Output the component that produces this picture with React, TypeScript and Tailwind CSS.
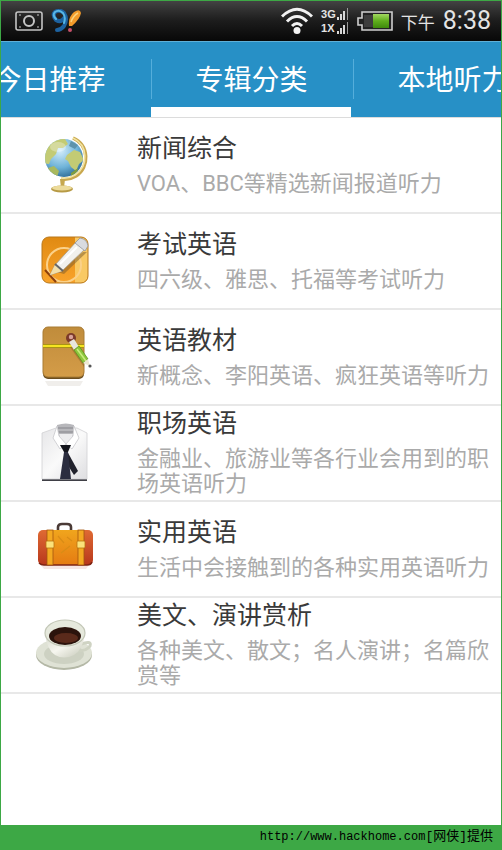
import type { ReactNode } from 'react';
import clsx from 'clsx';

function GlobeIcon() {
  return (
    <svg className="h-16 w-16" viewBox="0 0 64 64" aria-hidden="true">
      <defs>
        <radialGradient id="globe" cx="0.4" cy="0.3" r="0.75">
          <stop offset="0" stopColor="#d5eefb" />
          <stop offset="0.6" stopColor="#6fb3d8" />
          <stop offset="1" stopColor="#2c6a94" />
        </radialGradient>
        <clipPath id="globe-clip">
          <circle cx="31" cy="25" r="19" />
        </clipPath>
      </defs>
      <path d="M40 5 C56 12 57 34 43 43 C38 46 33 47 28 46" fill="none" stroke="#c9a84e" strokeWidth="3.4" />
      <path d="M40 5 C55 12 56 33 42 42 C37 45 33 46 28 45" fill="none" stroke="#f2e3a0" strokeWidth="1.6" />
      <circle cx="31" cy="25" r="19" fill="url(#globe)" />
      <g clipPath="url(#globe-clip)" fill="#c3cb74">
        <path d="M12 20 C15 10 24 5 32 6 L35 11 L30 15 L25 15 L23 21 L18 26 L16 31 L9 30 Z" />
        <path d="M34 22 L41 17 L47 19 L51 27 L46 31 L43 38 L38 34 L35 28 L32 26 Z" />
        <path d="M15 35 L21 33 L26 38 L24 44 L17 42 Z" fill="#a9b95e" />
        <path d="M38 40 L45 35 L44 42 L38 45 Z" fill="#7f9d3f" />
        <path d="M38 8 L45 12 L42 16 L36 13 Z" fill="#5e93ac" />
      </g>
      <ellipse cx="25" cy="14" rx="8" ry="5" fill="#fff" opacity="0.3" />
      <path d="M27 46 H32 L31 55 H28 Z" fill="#c6a84f" />
      <ellipse cx="29" cy="56" rx="11" ry="3.4" fill="#b79a45" />
      <ellipse cx="29" cy="55" rx="10" ry="2.4" fill="#ecdb9a" />
    </svg>
  );
}

function PenIcon() {
  return (
    <svg className="h-16 w-16" viewBox="0 0 64 64" aria-hidden="true">
      <defs>
        <linearGradient id="pad" x1="0" y1="0" x2="0" y2="1">
          <stop offset="0" stopColor="#e08a12" />
          <stop offset="1" stopColor="#f9a32b" />
        </linearGradient>
        <clipPath id="pad-clip">
          <rect x="9" y="8" width="46" height="46" rx="7" />
        </clipPath>
      </defs>
      <rect x="9" y="8" width="46" height="46" rx="7" fill="url(#pad)" />
      <g clipPath="url(#pad-clip)">
        <rect x="42" y="8" width="13" height="46" fill="#f9c964" />
        <circle cx="31" cy="36" r="17" fill="none" stroke="#fbd189" strokeWidth="2" />
      </g>
      <rect x="9" y="8" width="46" height="46" rx="7" fill="none" stroke="#b9791d" />
      <path d="M12 41 L23 53" stroke="#8d3f0c" strokeWidth="2" />
      <path d="M24 43 L50 23 L54 23 L31 45 Z" fill="#7a5a2a" opacity="0.5" />
      <path d="M17 46 L22 36 L43 13 L52 20 L29 42 Z" fill="#f1f0ec" stroke="#a59b88" strokeWidth="0.8" />
      <path d="M17 46 L22 36 L29 42 Z" fill="#f3dfa8" />
      <path d="M22 35 L30 42" stroke="#666" strokeWidth="2" />
      <path d="M42 14 L47 9 Q54 10 55 17 L52 22 Z" fill="#d9dbe0" stroke="#90949c" strokeWidth="0.8" />
      <path d="M27 35 L44 18" stroke="#fff" strokeWidth="2" />
    </svg>
  );
}

function NotebookIcon() {
  return (
    <svg className="h-16 w-16" viewBox="0 0 64 64" aria-hidden="true">
      <defs>
        <linearGradient id="cover" x1="0" y1="0" x2="0" y2="1">
          <stop offset="0" stopColor="#c08c3b" />
          <stop offset="1" stopColor="#d49c48" />
        </linearGradient>
      </defs>
      <path d="M12 56 L50 56 L47 61 L15 61 Z" fill="#f0eeeb" />
      <rect x="10" y="3" width="41" height="51" rx="5" fill="#6b4d1e" />
      <rect x="10" y="2" width="41" height="50" rx="5" fill="url(#cover)" stroke="#a97c35" />
      <path d="M10 21 H51" stroke="#8f7a12" strokeWidth="4" />
      <path d="M10 21 H51" stroke="#f6e420" strokeWidth="2.4" />
      <path d="M37 22 L51 42 V30 L45 20 Z" fill="#8b6328" opacity="0.5" />
      <circle cx="38" cy="13" r="5" fill="#7c3a2a" />
      <circle cx="38" cy="12" r="2.2" fill="#d8a29a" />
      <path d="M36 17 L41 14 L46 22 L41 25 Z" fill="#e8e6df" />
      <path d="M41 25 L46 21 L55 34 L50 38 Z" fill="#8cc63c" stroke="#5d9420" strokeWidth="0.8" />
      <path d="M44 24 L53 36" stroke="#c8ec7c" strokeWidth="1.5" />
      <path d="M50 38 L55 34 L57 41 Z" fill="#ede8d2" />
      <circle cx="57" cy="41" r="1.6" fill="#555" />
    </svg>
  );
}

function ShirtIcon() {
  return (
    <svg className="h-16 w-16" viewBox="0 0 64 64" aria-hidden="true">
      <defs>
        <linearGradient id="shirt" x1="0" y1="0" x2="1" y2="1">
          <stop offset="0" stopColor="#e6e6e8" />
          <stop offset="0.5" stopColor="#fafafa" />
          <stop offset="1" stopColor="#dedee1" />
        </linearGradient>
      </defs>
      <path d="M9 56 H54 V60 H9 Z" fill="#3f3f46" />
      <path d="M9 12 L23 7 L44 7 L54 12 V58 H9 Z" fill="url(#shirt)" stroke="#d0d0d3" strokeWidth="0.8" />
      <path d="M24 4 Q33 1 41 4 L40 18 L33 25 L25 18 Z" fill="#b7b7bb" />
      <path d="M25 7 H40 M25 11 H40" stroke="#97979c" strokeWidth="1.5" />
      <path d="M26 13 H40 L38 20 L33 25 L28 20 Z" fill="#ececee" />
      <path d="M24 5 L20 17 L27 28 L33 23 L26 15 Z" fill="#fff" stroke="#c8c8cc" strokeWidth="0.8" />
      <path d="M41 5 L46 17 L39 28 L33 23 L40 15 Z" fill="#fff" stroke="#c8c8cc" strokeWidth="0.8" />
      <path d="M34 30 L45 50 L41 54 L34 43 Z" fill="#20212c" />
      <path d="M27 24 H38 L35 31 H31 Z" fill="#14151d" />
      <path d="M31 31 H35 L38 58 H27 Z" fill="#2b2d3f" />
    </svg>
  );
}

function SuitcaseIcon() {
  return (
    <svg className="h-16 w-16" viewBox="0 0 64 64" aria-hidden="true">
      <defs>
        <linearGradient id="case" x1="0" y1="0" x2="0" y2="1">
          <stop offset="0" stopColor="#df6a33" />
          <stop offset="1" stopColor="#b8371c" />
        </linearGradient>
        <linearGradient id="case-front" x1="0" y1="0" x2="0" y2="1">
          <stop offset="0" stopColor="#f0a51d" />
          <stop offset="1" stopColor="#e57b12" />
        </linearGradient>
      </defs>
      <path d="M8 48 H56 L53 52 H11 Z" fill="#f6e6e4" />
      <path d="M25 14 V10 Q25 7 29 7 H34 Q38 7 38 10 V14" fill="none" stroke="#4a3a36" strokeWidth="2.6" />
      <rect x="5" y="13" width="55" height="35" rx="5" fill="url(#case)" />
      <rect x="14" y="13" width="37" height="35" fill="url(#case-front)" />
      <path d="M6 46 Q8 48 11 48 H54 Q58 48 59 45" fill="none" stroke="#7e2413" strokeWidth="1.5" />
      <rect x="14" y="13" width="6" height="35" fill="#f4a821" stroke="#a4550f" strokeWidth="0.8" />
      <rect x="45" y="13" width="6" height="35" fill="#f4a821" stroke="#a4550f" strokeWidth="0.8" />
      <rect x="13" y="24" width="8" height="7" rx="1" fill="#fbe27a" stroke="#b9750f" strokeWidth="0.8" />
      <rect x="44" y="24" width="8" height="7" rx="1" fill="#fbe27a" stroke="#b9750f" strokeWidth="0.8" />
      <path d="M25 19 L31 26 M28 36 L37 29 M34 20 L39 24" stroke="#d98c16" strokeWidth="1.2" />
    </svg>
  );
}

function CoffeeIcon() {
  return (
    <svg className="h-16 w-16" viewBox="0 0 64 64" aria-hidden="true">
      <defs>
        <linearGradient id="cup" x1="0" y1="0" x2="1" y2="1">
          <stop offset="0" stopColor="#d3d6c8" />
          <stop offset="0.5" stopColor="#f6f6ef" />
          <stop offset="1" stopColor="#c3c6b5" />
        </linearGradient>
      </defs>
      <ellipse cx="31" cy="42" rx="28" ry="15" fill="#b4b8a6" />
      <ellipse cx="31" cy="40" rx="28" ry="15" fill="#dfe2d5" />
      <ellipse cx="31" cy="41" rx="20" ry="10" fill="#cdd1c2" />
      <path d="M48 31 Q59 27 57 33 Q54 38 44 38" fill="none" stroke="#cfd3c3" strokeWidth="3" />
      <path d="M12 20 Q14 37 22 42 Q31 47 41 42 Q50 37 52 20 Z" fill="url(#cup)" />
      <ellipse cx="32" cy="20" rx="20" ry="13" fill="#e6e9dd" stroke="#c3c7b7" strokeWidth="1.2" />
      <ellipse cx="32" cy="23" rx="16" ry="9" fill="#2b130c" />
      <ellipse cx="33" cy="25" rx="12" ry="5" fill="#5a2a1b" />
    </svg>
  );
}

function CameraIcon() {
  return (
    <svg className="h-6 w-7" viewBox="0 0 28 24" fill="none" stroke="#c4c4c4" aria-hidden="true">
      <rect x="1" y="3" width="26" height="18" rx="2" strokeWidth="1.6" />
      <circle cx="14" cy="12" r="5" strokeWidth="2" />
      <path d="M4 6 H6 M22 6 H24 M4 18 H6 M22 18 H24" strokeWidth="1" />
    </svg>
  );
}

function AssistantIcon() {
  return (
    <svg className="h-6 w-8" viewBox="0 0 32 24" fill="none" aria-hidden="true">
      <path
        d="M13 9 Q10 14 5 11 Q1 6 4 3 Q9 0 13 4 Q17 10 13 17 Q10 21 6 21"
        stroke="#1d62a0"
        strokeWidth="4"
        strokeLinecap="round"
      />
      <path d="M5 10 Q1 6 4 3 Q8 0 12 4 Q15 8 13 14" stroke="#58b8e6" strokeWidth="2" strokeLinecap="round" />
      <path d="M18 17 Q17 8 23 3 Q29 -1 30 4 Q29 10 21 17 Z" fill="#f29a2a" />
      <path d="M20 13 Q22 7 27 4" stroke="#fbd27c" strokeWidth="1.5" />
      <circle cx="19" cy="21" r="2" fill="#c9506a" />
    </svg>
  );
}

function WifiIcon() {
  return (
    <svg className="h-7 w-8" viewBox="0 0 32 28" fill="none" stroke="#f2f2f2" aria-hidden="true">
      <path d="M1 9.5 Q16 -5 31 9.5" strokeWidth="3" />
      <path d="M6 14.5 Q16 4.5 26 14.5" strokeWidth="3" />
      <path d="M11 19 Q16 14 21 19" strokeWidth="3" />
      <circle cx="16" cy="23.5" r="3.5" fill="#f2f2f2" stroke="none" />
    </svg>
  );
}

function BatteryIcon() {
  return (
    <svg className="h-6 w-9" viewBox="0 0 36 24" aria-hidden="true">
      <defs>
        <linearGradient id="charge" x1="0" y1="0" x2="0" y2="1">
          <stop offset="0" stopColor="#a2d860" />
          <stop offset="0.5" stopColor="#5fae1c" />
          <stop offset="1" stopColor="#3f8a0c" />
        </linearGradient>
      </defs>
      <path d="M5 3 H35 V21 H5 V16 H1 V9 H5 Z" fill="#222" stroke="#cfcfcf" strokeWidth="1.6" />
      <rect x="7" y="6" width="9" height="12" fill="#3d3d3d" />
      <rect x="16" y="5" width="16" height="14" fill="url(#charge)" />
    </svg>
  );
}

function SignalBars() {
  return (
    <svg className="h-3 w-3" viewBox="0 0 12 12" fill="#d8d8d8" aria-hidden="true">
      <rect x="0" y="9" width="2" height="3" />
      <rect x="3" y="6" width="2" height="6" />
      <rect x="6" y="3" width="2" height="9" />
      <rect x="10" y="0" width="1" height="12" fill="#999" />
    </svg>
  );
}

const tabs = ['今日推荐', '专辑分类', '本地听力'];
const activeTab = '专辑分类';

const categories: { title: string; description: string; icon: ReactNode }[] = [
  { title: '新闻综合', description: 'VOA、BBC等精选新闻报道听力', icon: <GlobeIcon /> },
  { title: '考试英语', description: '四六级、雅思、托福等考试听力', icon: <PenIcon /> },
  { title: '英语教材', description: '新概念、李阳英语、疯狂英语等听力', icon: <NotebookIcon /> },
  { title: '职场英语', description: '金融业、旅游业等各行业会用到的职场英语听力', icon: <ShirtIcon /> },
  { title: '实用英语', description: '生活中会接触到的各种实用英语听力', icon: <SuitcaseIcon /> },
  { title: '美文、演讲赏析', description: '各种美文、散文；名人演讲；名篇欣赏等', icon: <CoffeeIcon /> },
];

function StatusBar() {
  return (
    <div className="flex h-10 items-center justify-between bg-linear-to-b from-[#434343] via-[#1c1c1c] to-[#080808] pr-2.5 pl-3.5">
      <div className="flex items-center gap-2">
        <CameraIcon />
        <AssistantIcon />
      </div>
      <div className="flex items-center gap-2 text-[#e4e4e4]">
        <WifiIcon />
        <div className="font-['Liberation_Sans'] text-[11px] leading-[14px] font-bold">
          <div className="flex items-center justify-between gap-px">
            3G
            <SignalBars />
          </div>
          <div className="flex items-center justify-between gap-px">
            1X
            <SignalBars />
          </div>
        </div>
        <BatteryIcon />
        <div className="flex items-baseline gap-2">
          <span className="text-[17px]">下午</span>
          <span className="font-[Roboto] text-[25px]">8:38</span>
        </div>
      </div>
    </div>
  );
}

function TabBar() {
  return (
    <nav className="flex h-19 justify-center gap-0.5 overflow-hidden border-t border-[#5fb0d8] bg-[#2790c6]">
      {tabs.map((tab) => (
        <button
          key={tab}
          type="button"
          className={clsx(
            'flex w-2/5 shrink-0 items-center border-b-10 pt-2 text-[28px] text-white',
            tab === activeTab ? 'border-white' : 'border-transparent'
          )}
        >
          <span className="h-10 w-px bg-[#55aedb]" />
          <span className="flex-1 pt-1 whitespace-nowrap">{tab}</span>
        </button>
      ))}
    </nav>
  );
}

export default function App() {
  return (
    <div className="flex min-h-screen flex-col border border-[#3da845] bg-white font-[Roboto,'Noto_Sans_CJK_SC',sans-serif]">
      <StatusBar />
      <TabBar />

      {/* Category list */}
      <main className="flex-1 border-t border-[#dcdcdc]">
        <ul>
          {categories.map((item) => (
            <li key={item.title}>
              <a
                href="#"
                className="flex min-h-24 items-center gap-10 border-b-2 border-[#e8e8e8] pr-2 pl-8"
              >
                <span className="shrink-0">{item.icon}</span>
                <span className="flex min-w-0 flex-1 flex-col gap-1 pb-1">
                  <span className="text-[25px] leading-9 text-[#3a3a3a]">{item.title}</span>
                  <span className="text-[22px] leading-[25px] text-[#aaa]">{item.description}</span>
                </span>
              </a>
            </li>
          ))}
        </ul>
      </main>

      {/* Credit */}
      <footer className="flex h-6 items-center justify-end bg-[#3da845] pr-2 font-['Liberation_Mono','Noto_Sans_CJK_SC',monospace] text-black">
        <span className="text-[12px]">http://www.hackhome.com</span>
        <span className="text-[13px]">[网侠]提供</span>
      </footer>
    </div>
  );
}
